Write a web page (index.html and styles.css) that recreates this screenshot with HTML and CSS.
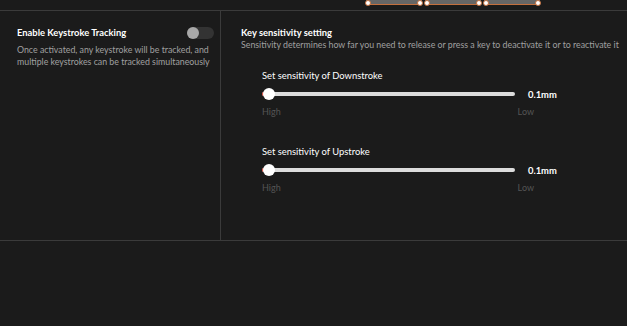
FILE: index.html
```html
<!DOCTYPE html>
<html lang="en">
<head>
    <meta charset="UTF-8">
    <title>Keystroke settings</title>
    <link rel="stylesheet" href="styles.css">
</head>
<body>
    <div class="topbar">
        <div class="range-bar"><span class="dot"></span><span class="dot"></span></div>
        <div class="range-bar"><span class="dot"></span><span class="dot"></span></div>
        <div class="range-bar"><span class="dot"></span><span class="dot"></span></div>
    </div>

    <div class="panels">
        <div class="panel-left">
            <div class="row-head">
                <div class="title">Enable Keystroke Tracking</div>
                <div class="toggle"><span class="knob"></span></div>
            </div>
            <p class="desc">Once activated, any keystroke will be tracked, and multiple keystrokes can be tracked simultaneously</p>
        </div>

        <div class="panel-right">
            <div class="title">Key sensitivity setting</div>
            <p class="desc">Sensitivity determines how far you need to release or press a key to deactivate it or to reactivate it</p>

            <div class="slider-group">
                <div class="slider-label">Set sensitivity of Downstroke</div>
                <div class="slider-row">
                    <div class="track"><span class="fill"></span><span class="thumb"></span></div>
                    <span class="value">0.1mm</span>
                </div>
                <div class="scale"><span>High</span><span>Low</span></div>
            </div>

            <div class="slider-group">
                <div class="slider-label">Set sensitivity of Upstroke</div>
                <div class="slider-row">
                    <div class="track"><span class="fill"></span><span class="thumb"></span></div>
                    <span class="value">0.1mm</span>
                </div>
                <div class="scale"><span>High</span><span>Low</span></div>
            </div>
        </div>
    </div>
</body>
</html>
```

FILE: styles.css
```css
body {
    margin: 0;
    background-color: #1b1b1b;
    font-family: Lato, "Noto Sans", sans-serif;
    font-size: 9px;
    color: #a0a0a0;
}

.topbar {
    height: 11px;
    border-bottom: 1px solid #3b3b3b;
    display: flex;
    gap: 3px;
    padding-left: 366px;
    box-sizing: border-box;
}

.range-bar {
    position: relative;
    width: 56px;
    height: 5px;
    background-color: #666;
    border-bottom: 1px solid #c4703e;
    box-sizing: border-box;
}

.dot {
    position: absolute;
    top: 0;
    width: 6px;
    height: 6px;
    border-radius: 50%;
    background-color: #fff;
    border: 1px solid #c4703e;
    box-sizing: border-box;
}

.dot:first-child {
    left: -1px;
}

.dot:last-child {
    right: -1px;
}

.panels {
    display: flex;
    height: 229px;
    border-bottom: 1px solid #3b3b3b;
}

.panel-left {
    flex-shrink: 0;
    width: 221px;
    border-right: 1px solid #3b3b3b;
    padding: 16px 6px 0 17px;
    box-sizing: border-box;
}

.row-head {
    display: flex;
    justify-content: space-between;
    align-items: center;
}

.title {
    color: #fff;
    font-weight: 700;
    font-size: 9.4px;
    line-height: 12px;
}

.toggle {
    width: 27px;
    height: 12px;
    border-radius: 6px;
    background-color: #333;
    display: flex;
    align-items: center;
}

.knob {
    width: 12px;
    height: 12px;
    border-radius: 50%;
    background-color: #a8a8a8;
}

.desc {
    margin: 5px -4px 0 0;
    font-size: 8.8px;
    line-height: 12px;
}

.panel-right {
    flex: 1;
    min-width: 0;
    padding: 16px 0 0 20px;
}

.panel-right .desc {
    margin-top: 0;
    white-space: nowrap;
}

.slider-group {
    margin: 19px 0 0 21px;
}

.slider-group + .slider-group {
    margin-top: 28px;
}

.slider-label {
    color: #fff;
    font-size: 9.4px;
    line-height: 12px;
}

.slider-row {
    display: flex;
    align-items: center;
    margin-top: 6px;
    height: 12px;
}

.track {
    position: relative;
    width: 253px;
    height: 4px;
    border-radius: 2px;
    background-color: #dcdcdc;
}

.fill {
    position: absolute;
    left: 0;
    top: 0;
    width: 4px;
    height: 4px;
    border-radius: 2px 0 0 2px;
    background-color: #e0493a;
}

.thumb {
    position: absolute;
    left: 1px;
    top: -4px;
    width: 12px;
    height: 12px;
    border-radius: 50%;
    background-color: #fff;
}

.value {
    margin-left: 13px;
    color: #fff;
    font-weight: 700;
    font-size: 9.4px;
}

.scale {
    display: flex;
    justify-content: space-between;
    width: 272px;
    margin-top: 6px;
    color: #555;
    line-height: 12px;
}
```
